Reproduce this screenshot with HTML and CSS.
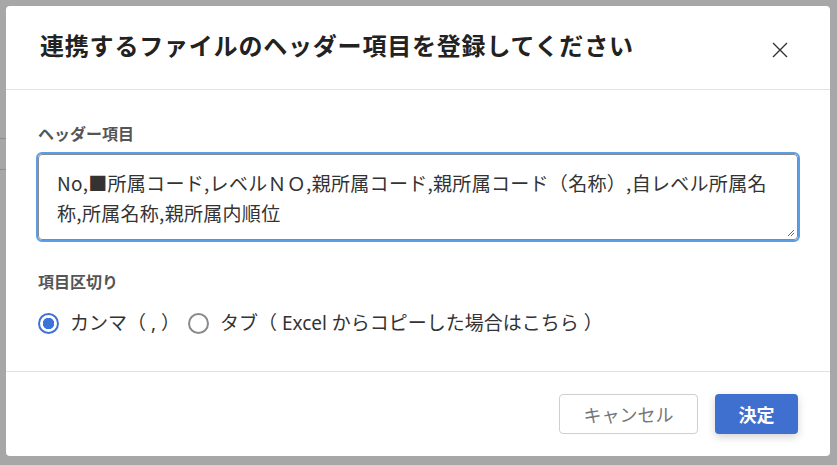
FILE: index.html
```html
<!DOCTYPE html>
<html lang="ja">
<head>
<meta charset="utf-8">
<link rel="stylesheet" href="styles.css">
</head>
<body>
<div class="backdrop"></div>
<div class="dialog">
  <div class="dialog-header">
    <h1 class="title">連携するファイルのヘッダー項目を登録してください</h1>
    <button class="close" aria-label="閉じる">
      <svg width="18" height="18" viewBox="0 0 18 18"><path d="M2 2 L16 16 M16 2 L2 16" stroke="#333" stroke-width="1.4" fill="none"/></svg>
    </button>
  </div>
  <div class="dialog-body">
    <div class="field">
      <div class="label">ヘッダー項目</div>
      <div class="textarea">No,■所属コード,レベルＮＯ,親所属コード,親所属コード（名称）,自レベル所属名称,所属名称,親所属内順位<svg class="grip" width="9" height="9" viewBox="0 0 9 9"><path d="M8 2 L2 8 M8 5 L5 8" stroke="#666" stroke-width="1" fill="none"/></svg></div>
    </div>
    <div class="field">
      <div class="label">項目区切り</div>
      <div class="radios">
        <label class="radio"><span class="dot checked"></span><span>カンマ（ , ）</span></label>
        <label class="radio"><span class="dot"></span><span>タブ（ Excel からコピーした場合はこちら ）</span></label>
      </div>
    </div>
  </div>
  <div class="dialog-footer">
    <button class="btn btn-cancel">キャンセル</button>
    <button class="btn btn-ok">決定</button>
  </div>
</div>
</body>
</html>
```
FILE: styles.css
```css
html, body {
  margin: 0;
  padding: 0;
}
body {
  width: 837px;
  height: 465px;
  background: #a7a7a7;
  padding: 6px 7px 9px 6px;
  box-sizing: border-box;
  font-family: "Noto Sans", "Noto Sans CJK JP", sans-serif;
  position: relative;
  overflow: hidden;
  text-spacing-trim: space-all;
}
.backdrop {
  position: absolute;
  left: 0;
  top: 138px;
  width: 6px;
  height: 30px;
  border-top: 1px solid #8c8c8c;
  border-bottom: 1px solid #8c8c8c;
}
.dialog {
  width: 824px;
  height: 450px;
  background: #fff;
  border-radius: 4px;
  display: flex;
  flex-direction: column;
}
.dialog-header {
  height: 84px;
  box-sizing: border-box;
  border-bottom: 1px solid #e2e2e2;
  display: flex;
  align-items: center;
  padding: 0 41px 0 34px;
  justify-content: space-between;
}
.title {
  margin: 0;
  font-family: "Noto Sans CJK JP", sans-serif;
  font-size: 24px;
  font-weight: 700;
  color: #222;
  letter-spacing: 0.8px;
  line-height: 30px;
  padding-bottom: 6px;
}
.close {
  border: none;
  background: none;
  padding: 0;
  width: 18px;
  height: 18px;
  margin-top: 4px;
  display: flex;
}
.dialog-body {
  flex: 1;
  padding: 32px 32px 0 32px;
  display: flex;
  flex-direction: column;
  gap: 30px;
}
.label {
  font-family: "Noto Sans CJK JP", sans-serif;
  font-size: 16px;
  font-weight: 700;
  color: #555;
  line-height: 22px;
  margin-bottom: 10px;
}
.field + .field .label {
  margin-bottom: 18px;
}
.textarea {
  position: relative;
  height: 86px;
  box-sizing: border-box;
  border: 1px solid #8a8a8a;
  border-radius: 4px;
  outline: 2px solid #5b9de8;
  outline-offset: 0;
  padding: 13px 18px 9px;
  font-size: 19px;
  line-height: 30px;
  letter-spacing: 0.3px;
  color: #333;
  font-family: "Noto Sans CJK JP", sans-serif;
}
.grip {
  position: absolute;
  right: 2px;
  bottom: 2px;
}
.radios {
  display: flex;
  align-items: center;
  gap: 8px;
  font-size: 19px;
  color: #333;
  line-height: 26px;
}
.radio {
  display: flex;
  align-items: center;
  gap: 11px;
}
.dot {
  width: 21px;
  height: 21px;
  box-sizing: border-box;
  border-radius: 50%;
  border: 2px solid #8a8a8a;
  display: inline-block;
}
.dot.checked {
  border-color: #3d72d8;
  background: radial-gradient(circle, #3d72d8 0 5.5px, #fff 6px);
}
.dialog-footer {
  height: 85px;
  box-sizing: border-box;
  border-top: 1px solid #e2e2e2;
  display: flex;
  justify-content: flex-end;
  align-items: center;
  gap: 17px;
  padding: 0 32px 0 0;
}
.btn {
  height: 40px;
  border-radius: 4px;
  font-family: "Noto Sans CJK JP", sans-serif;
  font-size: 18px;
  cursor: pointer;
}
.btn-cancel {
  width: 139px;
  background: #fff;
  border: 1px solid #cfcfcf;
  color: #777;
}
.btn-ok {
  width: 83px;
  background: #3f6fcf;
  border: none;
  color: #fff;
  font-weight: 700;
  box-shadow: 0 3px 8px rgba(0,0,0,0.18);
}
```
